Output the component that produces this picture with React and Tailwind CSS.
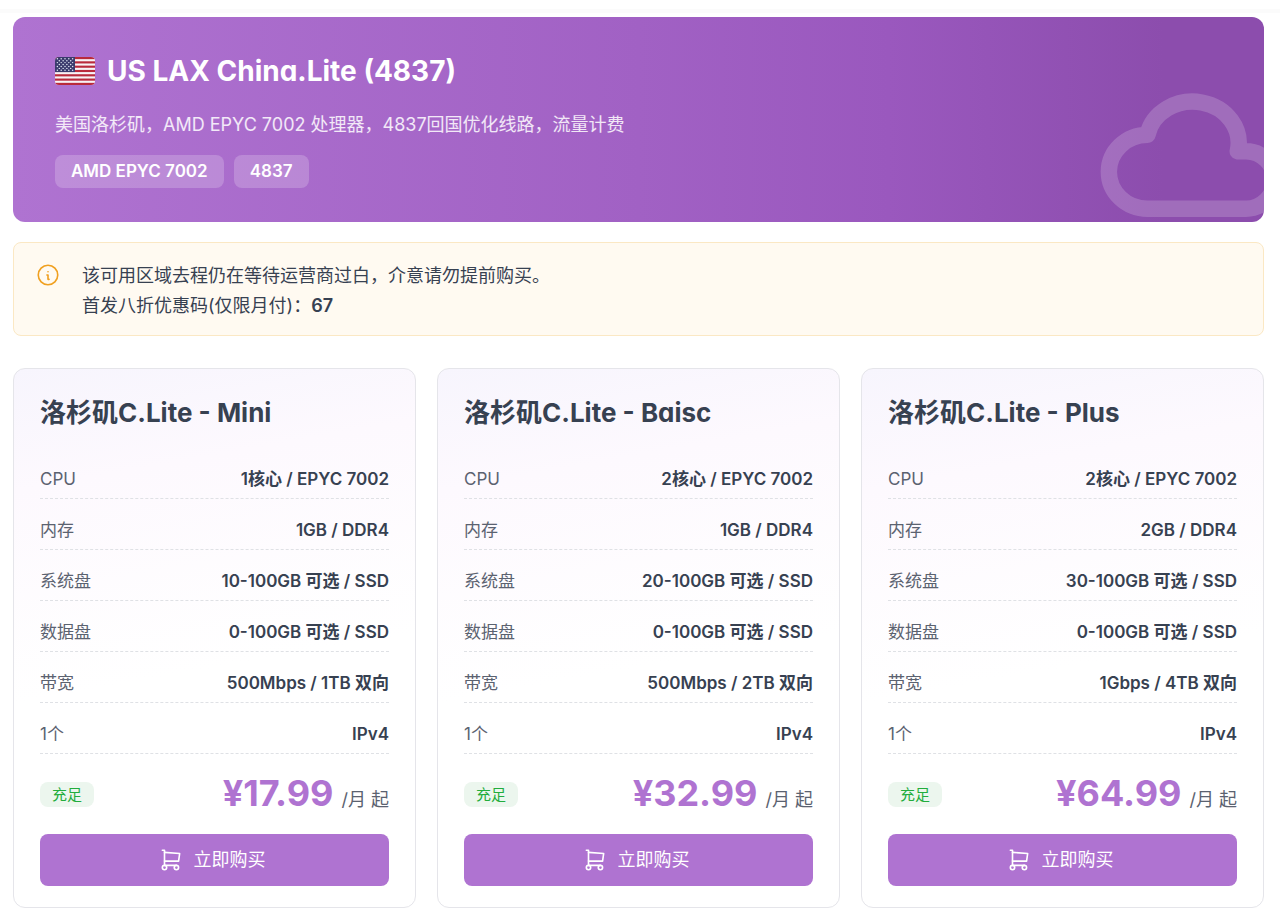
import React from "react";

const plans = [
  {
    name: "洛杉矶C.Lite - Mini",
    price: "¥17.99",
    specs: [
      ["CPU", "1核心 / EPYC 7002"],
      ["内存", "1GB / DDR4"],
      ["系统盘", "10-100GB 可选 / SSD"],
      ["数据盘", "0-100GB 可选 / SSD"],
      ["带宽", "500Mbps / 1TB 双向"],
      ["1个", "IPv4"],
    ],
  },
  {
    name: "洛杉矶C.Lite - Baisc",
    price: "¥32.99",
    specs: [
      ["CPU", "2核心 / EPYC 7002"],
      ["内存", "1GB / DDR4"],
      ["系统盘", "20-100GB 可选 / SSD"],
      ["数据盘", "0-100GB 可选 / SSD"],
      ["带宽", "500Mbps / 2TB 双向"],
      ["1个", "IPv4"],
    ],
  },
  {
    name: "洛杉矶C.Lite - Plus",
    price: "¥64.99",
    specs: [
      ["CPU", "2核心 / EPYC 7002"],
      ["内存", "2GB / DDR4"],
      ["系统盘", "30-100GB 可选 / SSD"],
      ["数据盘", "0-100GB 可选 / SSD"],
      ["带宽", "1Gbps / 4TB 双向"],
      ["1个", "IPv4"],
    ],
  },
];

function Icon({ className, strokeWidth = 1.5, children }) {
  return (
    <svg
      viewBox="0 0 24 24"
      fill="none"
      stroke="currentColor"
      strokeWidth={strokeWidth}
      strokeLinecap="round"
      strokeLinejoin="round"
      aria-hidden="true"
      className={className}
    >
      {children}
    </svg>
  );
}

function Flag() {
  const stars = [];
  for (let row = 0; row < 7; row++) {
    for (let col = 0; col < (row % 2 ? 4 : 5); col++) {
      stars.push([2.4 + col * 3.8 + (row % 2 ? 1.9 : 0), 1.8 + row * 2]);
    }
  }
  return (
    <svg
      viewBox="0 0 40 29"
      preserveAspectRatio="none"
      className="h-7 w-10 shrink-0 rounded"
      role="img"
      aria-label="US"
    >
      <rect width="40" height="29" fill="#f7f3f6" />
      {[0, 1, 2, 3, 4, 5, 6].map((i) => (
        <rect key={i} y={i * 4.46} width="40" height="2.23" fill="#b92a3c" />
      ))}
      <rect width="20" height="15.6" fill="#3b3b6d" />
      {stars.map(([x, y], i) => (
        <circle key={i} cx={x} cy={y} r="0.75" fill="#dfe6f2" />
      ))}
    </svg>
  );
}

function PlanCard({ plan }) {
  return (
    <article className="flex flex-col rounded-xl border border-[#e5e5ea] bg-[linear-gradient(170deg,#f7f5fd_0%,#fdf9fe_20%,#ffffff_55%)] px-[26px] pt-6 pb-[21px]">
      <h2 className="text-[26px] leading-10 font-bold text-[#374151]">{plan.name}</h2>
      <dl className="mt-[15px]">
        {plan.specs.map(([label, value]) => (
          <div
            key={label}
            className="flex h-[51px] items-end justify-between border-b border-dashed border-[#dfe1e5] pb-[7px] text-[17px] leading-6"
          >
            <dt className="text-[#5b6270]">{label}</dt>
            <dd className="font-semibold text-[#374151]">{value}</dd>
          </div>
        ))}
      </dl>
      <div className="mt-4 flex h-12 items-center justify-between">
        <span className="rounded-lg bg-[#ecf6ee] px-3 text-[15px] leading-[25px] text-[#22ad3c]">充足</span>
        <p className="flex items-baseline gap-2 pt-1 text-lg leading-[48px] text-[#5b6270]">
          <strong className="text-4xl leading-[48px] font-bold text-[#af73d1]">{plan.price}</strong>
          <span>/月 起</span>
        </p>
      </div>
      <button
        type="button"
        className="mt-4 flex h-[52px] items-center justify-center gap-2.5 rounded-lg bg-[#af73d1] pr-1.5 text-lg text-white"
      >
        <Icon className="size-[26px]">
          <circle cx="6" cy="19" r="2" />
          <circle cx="17" cy="19" r="2" />
          <path d="M17 17H6V3H4" />
          <path d="M6 5l14 1-1 7H6" />
        </Icon>
        立即购买
      </button>
    </article>
  );
}

export default function App() {
  return (
    <div className="min-h-screen bg-white font-['Inter','Noto_Sans_CJK_SC',sans-serif] [font-feature-settings:'cv11']">
      <div className="pt-[9px]">
        <div className="h-1 bg-[#fbfbfb]" />
      </div>
      <main className="pt-1 pr-4 pb-[15px] pl-[13px]">
        <header className="relative overflow-hidden rounded-xl bg-[linear-gradient(90deg,#af73d1_0%,#a161c4_50%,#9a58be_70%,#8c4dad_92%)] px-[42px] pt-[34px] pb-[34px] text-white">
          <div className="flex items-center gap-3">
            <Flag />
            <h1 className="text-[28px] leading-10 font-bold">US LAX China.Lite (4837)</h1>
          </div>
          <p className="mt-5 text-lg leading-[27px] text-white/85">
            美国洛杉矶，AMD EPYC 7002 处理器，4837回国优化线路，流量计费
          </p>
          <ul className="mt-[17px] flex gap-[10px] text-[17px] leading-[33px] font-semibold">
            <li className="rounded-lg bg-white/20 px-4">AMD EPYC 7002</li>
            <li className="rounded-lg bg-white/20 px-4">4837</li>
          </ul>
          <Icon strokeWidth={2} className="absolute -right-[23px] -bottom-9 size-[197px] text-white/18">
            <path d="M7 18a4.6 4.4 0 0 1 0-9a5 4.5 0 0 1 11 2h1a3.5 3.5 0 0 1 0 7h-12" />
          </Icon>
        </header>

        <section className="mt-5 flex gap-[21px] rounded-lg border border-[#fbe8c4] bg-[#fffaf1] px-[21px] pt-[18px] pb-[14px] text-[#374151]">
          <Icon className="mt-px size-[26px] shrink-0 text-[#f0a020]">
            <circle cx="12" cy="12" r="9" />
            <path d="M12 9h.01" />
            <path d="M11 12h1v4h1" />
          </Icon>
          <p className="text-lg leading-[30px]">
            该可用区域去程仍在等待运营商过白，介意请勿提前购买。
            <br />
            首发八折优惠码(仅限月付)：<strong className="font-semibold">67</strong>
          </p>
        </section>

        <section className="mt-8 grid grid-cols-3 gap-[21px]">
          {plans.map((plan) => (
            <PlanCard key={plan.name} plan={plan} />
          ))}
        </section>
      </main>
    </div>
  );
}
